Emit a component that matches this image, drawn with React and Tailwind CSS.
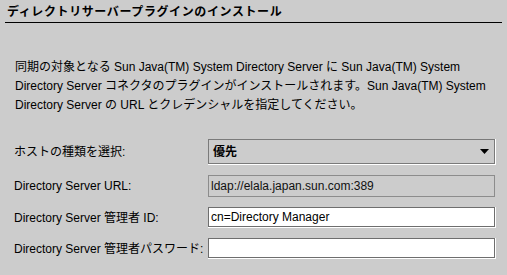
export default function App() {
  return (
    <div
      className="w-[507px] h-[275px] bg-[#cccccc] text-black text-[12px] overflow-hidden"
      style={{ fontFamily: '"Liberation Sans", "Noto Sans CJK JP", sans-serif' }}
    >
      {/* heading */}
      <div className="mx-[5px] h-[23px] border-b border-black pt-[5px] pl-[2px]">
        <div className="font-bold leading-[14px] tracking-[0.6px]">ディレクトリサーバープラグインのインストール</div>
      </div>

      {/* description */}
      <div className="mt-[35px] pl-[15px] leading-[19px] whitespace-nowrap">
        <div>同期の対象となる Sun Java(TM) System Directory Server に Sun Java(TM) System</div>
        <div>Directory Server コネクタのプラグインがインストールされます。Sun Java(TM) System</div>
        <div>Directory Server の URL とクレデンシャルを指定してください。</div>
      </div>

      {/* form */}
      <div className="mt-[24px] grid grid-cols-[194px_288px] gap-y-[10px] pl-[14px] items-center">
        <div className="leading-[14px]">ホストの種類を選択:</div>
        <div className="border-r border-b border-white w-[288px]">
          <div className="h-[25px] border border-[#7a7a7a] flex items-center justify-between pl-[4px] pr-[5px]">
            <span className="font-bold">優先</span>
            <svg width="9" height="5" viewBox="0 0 9 5">
              <polygon points="0,0 9,0 4.5,5" fill="#000" />
            </svg>
          </div>
        </div>

        <div className="leading-[14px]">Directory Server URL:</div>
        <div className="h-[22px] w-[287px] border border-[#8c8c8c] flex items-center pl-[2px] text-[#111]">
          ldap://elala.japan.sun.com:389
        </div>

        <div className="leading-[14px]">Directory Server 管理者 ID:</div>
        <div className="border-r border-b border-white w-[288px]">
          <div className="h-[20px] border border-[#6e6e6e] bg-white flex items-center pl-[2px]">
            cn=Directory Manager
          </div>
        </div>

        <div className="leading-[14px] whitespace-nowrap">Directory Server 管理者パスワード:</div>
        <div className="border-r border-b border-white w-[288px]">
          <div className="h-[20px] border border-[#6e6e6e] bg-white"></div>
        </div>
      </div>
    </div>
  );
}
